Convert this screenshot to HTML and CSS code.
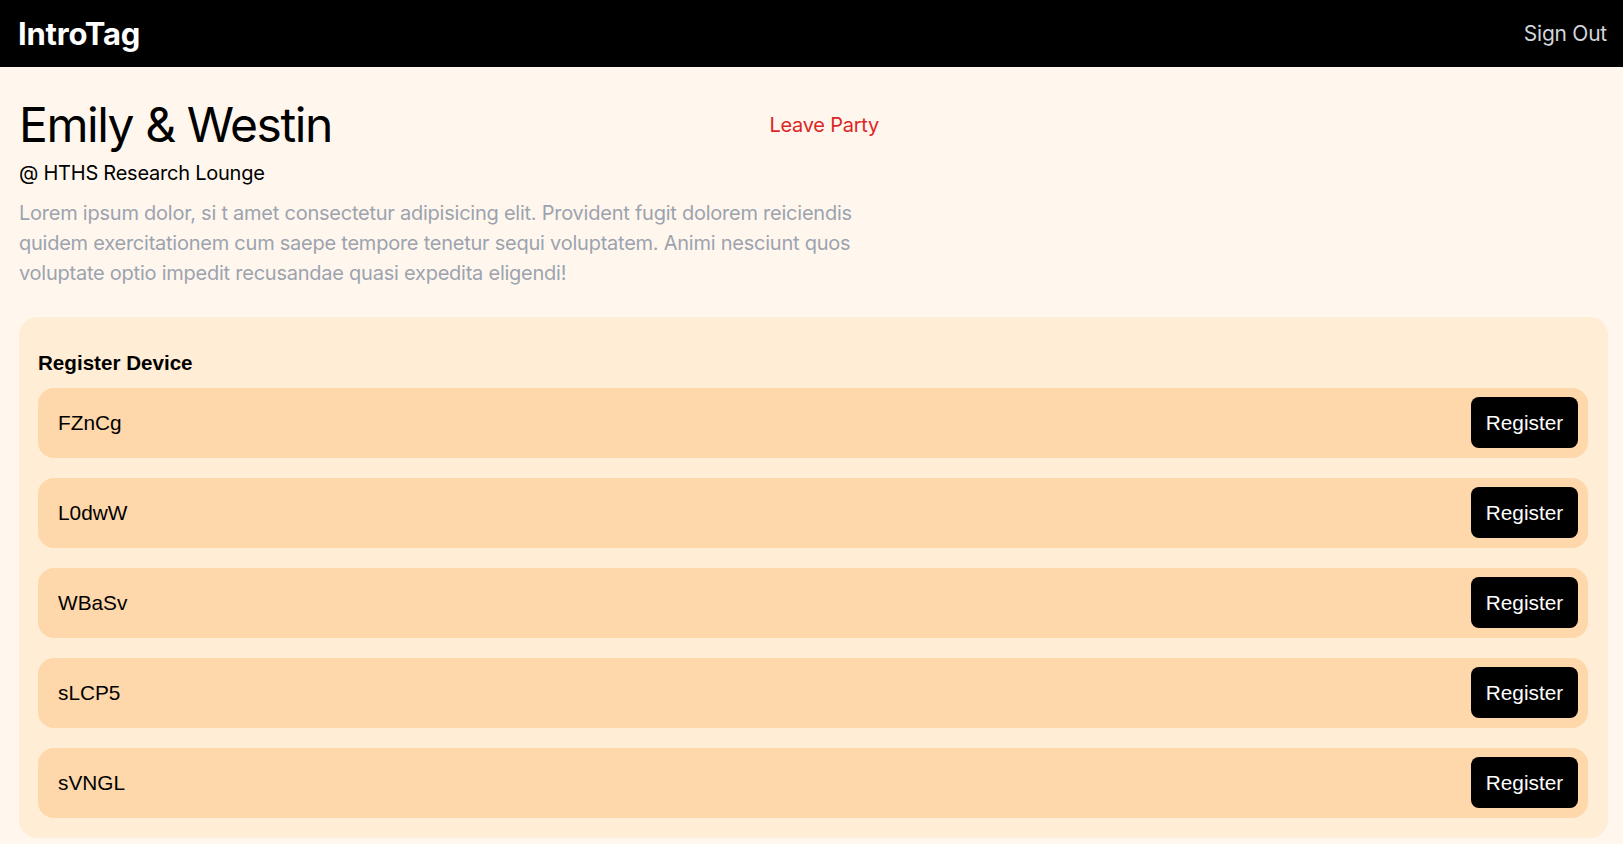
FILE: index.html
```html
<!DOCTYPE html>
<html>
<head>
<meta charset="utf-8">
<link rel="stylesheet" href="styles.css">
</head>
<body>
<header class="topbar">
  <div class="brand">IntroTag</div>
  <a class="signout">Sign Out</a>
</header>
<main class="page">
  <section class="party">
    <div class="party-head">
      <h1 class="party-title">Emily &amp; Westin</h1>
      <a class="leave">Leave Party</a>
    </div>
    <p class="location">@ HTHS Research Lounge</p>
    <p class="desc">Lorem ipsum dolor, si t amet consectetur adipisicing elit. Provident fugit dolorem reiciendis quidem exercitationem cum saepe tempore tenetur sequi voluptatem. Animi nesciunt quos voluptate optio impedit recusandae quasi expedita eligendi!</p>
  </section>
  <section class="card">
    <h2 class="card-title">Register Device</h2>
    <div class="list">
      <div class="row"><span class="code">FZnCg</span><button class="btn">Register</button></div>
      <div class="row"><span class="code">L0dwW</span><button class="btn">Register</button></div>
      <div class="row"><span class="code">WBaSv</span><button class="btn">Register</button></div>
      <div class="row"><span class="code">sLCP5</span><button class="btn">Register</button></div>
      <div class="row"><span class="code">sVNGL</span><button class="btn">Register</button></div>
    </div>
  </section>
</main>
</body>
</html>
```

FILE: styles.css
```css
* { box-sizing: border-box; }
html, body { margin: 0; padding: 0; }
body {
  background: #fff7ed;
  font-family: "Inter", "Liberation Sans", sans-serif;
  letter-spacing: -0.24px;
  color: #000;
}
.topbar {
  height: 67px;
  background: #000;
  display: flex;
  align-items: center;
  justify-content: space-between;
  padding: 0 16px 0 18px;
}
.brand {
  color: #fff;
  font-family: "Inter", sans-serif;
  font-weight: 700;
  font-size: 31px;
  letter-spacing: -0.2px;
}
.signout {
  color: #d1d5db;
  font-size: 21px;
  cursor: pointer;
}
.page {
  padding: 30px 15px 8px 19px;
}
.party { width: 860px; }
.party-head {
  display: flex;
  align-items: center;
  justify-content: space-between;
}
.party-title {
  margin: 0;
  font-weight: 400;
  font-size: 48px;
  line-height: 56px;
  letter-spacing: -1.45px;
}
.leave {
  color: #dc2626;
  font-size: 20px;
  cursor: pointer;
}
.location {
  margin: 6px 0 0;
  font-size: 20px;
  line-height: 28px;
}
.desc {
  margin: 11px 0 0;
  font-size: 20px;
  line-height: 30px;
  color: #9ca3af;
}
.card {
  margin-top: 29px;
  background: #ffedd5;
  border-radius: 18px;
  padding: 32px 20px 20px 19px;
}
.card-title {
  margin: 0 0 11px;
  font-family: "Liberation Sans", Arial, sans-serif;
  font-weight: 700;
  font-size: 20.6px;
  line-height: 28px;
  letter-spacing: 0;
}
.list {
  display: flex;
  flex-direction: column;
  gap: 20px;
}
.row {
  display: flex;
  align-items: center;
  justify-content: space-between;
  background: #fed7aa;
  border-radius: 16px;
  padding: 9px 10px 10px 20px;
  font-family: "Liberation Sans", Arial, sans-serif;
  letter-spacing: 0;
}
.code { font-size: 20.8px; }
.btn {
  background: #000;
  color: #fff;
  border: 0;
  border-radius: 8px;
  height: 51px;
  width: 107px;
  font-family: "Liberation Sans", Arial, sans-serif;
  font-size: 20.8px;
  letter-spacing: 0;
  cursor: pointer;
}
```
